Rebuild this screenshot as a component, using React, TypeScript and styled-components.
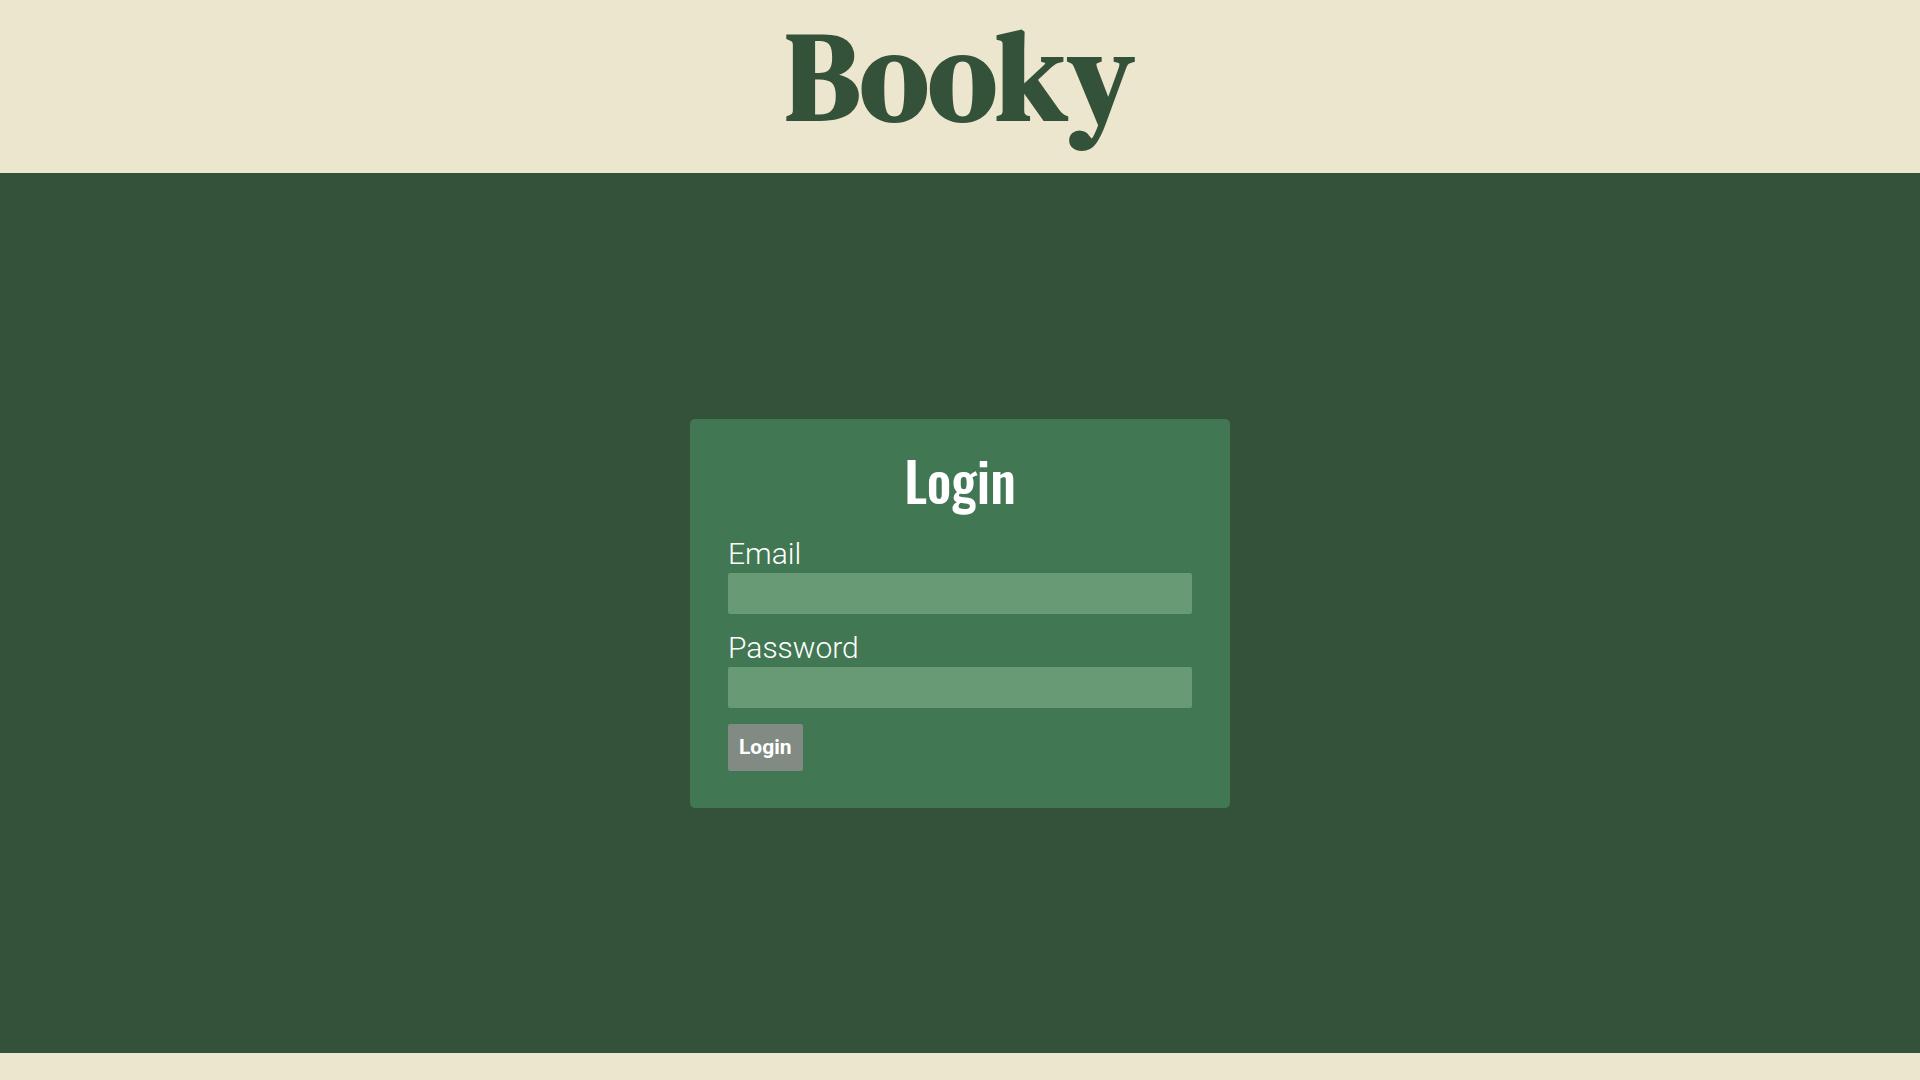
import React from "react";
import styled, { createGlobalStyle } from "styled-components";

const GlobalStyle = createGlobalStyle`
  *, *::before, *::after { box-sizing: border-box; }
  body {
    margin: 0;
    background: #ede6ce;
    font-family: Roboto, "Liberation Sans", sans-serif;
  }
`;

const Page = styled.div`
  display: flex;
  flex-direction: column;
  min-height: 100vh;
`;

const Header = styled.header`
  padding-bottom: 20px;
  background: #ede6ce;
  text-align: center;
`;

const Brand = styled.h1`
  margin: 0;
  color: #345239;
  font-family: "DM Serif Display", "Liberation Serif", serif;
  font-size: 124px;
  font-weight: 700;
  line-height: 153px;
`;

const Main = styled.main`
  flex: 1;
  display: flex;
  align-items: center;
  justify-content: center;
  background: #345239;
`;

const Card = styled.form`
  display: flex;
  flex-direction: column;
  gap: 16px;
  width: 540px;
  max-width: 100%;
  padding: 37px 38px;
  border-radius: 5px;
  background: #427754;
  color: #fff;
`;

const Title = styled.h2`
  margin: 0 0 16px;
  font-family: Oswald, "Roboto Condensed", Roboto, sans-serif;
  font-size: 54px;
  font-weight: 500;
  line-height: 48px;
  text-align: center;
`;

const Field = styled.div`
  display: flex;
  flex-direction: column;
`;

const Label = styled.label`
  font-size: 30px;
  font-weight: 300;
  line-height: 36px;
  padding-bottom: 1px;
`;

const Input = styled.input`
  width: 100%;
  height: 41px;
  padding: 8px;
  border: 0;
  border-radius: 2px;
  background: #689a75;
  color: #fff;
  font: inherit;
  font-size: 20px;
`;

const Submit = styled.button`
  align-self: flex-start;
  padding: 11px;
  border: 0;
  border-radius: 2px;
  background: #828b83;
  color: #fff;
  font-family: inherit;
  font-size: 21px;
  font-weight: 700;
  line-height: 25px;
  cursor: pointer;
`;

const Footer = styled.footer`
  height: 27px;
  background: #ede6ce;
`;

export default function App() {
  return (
    <Page>
      <GlobalStyle />
      <Header>
        <Brand>Booky</Brand>
      </Header>
      <Main>
        <Card onSubmit={(event: React.FormEvent) => event.preventDefault()}>
          <Title>Login</Title>
          <Field>
            <Label htmlFor="email">Email</Label>
            <Input id="email" type="email" />
          </Field>
          <Field>
            <Label htmlFor="password">Password</Label>
            <Input id="password" type="password" />
          </Field>
          <Submit type="submit">Login</Submit>
        </Card>
      </Main>
      <Footer />
    </Page>
  );
}
